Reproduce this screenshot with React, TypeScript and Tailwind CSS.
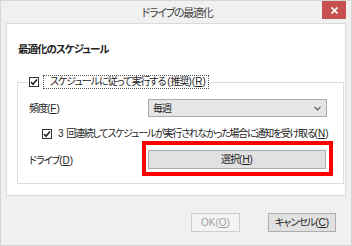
import {useState} from 'react';
import type {ReactNode} from 'react';

const FONT = 'font-["Liberation_Sans","Noto_Sans_CJK_JP",sans-serif] [font-feature-settings:"palt"]';

// latin bits keep normal spacing, only the kana get squeezed
function L({children}: { children: ReactNode }) {
    return <span className="tracking-[0px]">{children}</span>;
}

function Check({checked, onToggle}: { checked: boolean; onToggle: () => void }) {
    return (
        <button
            onClick={onToggle}
            className="w-[10px] h-[10px] border border-[#333] bg-white flex items-center justify-center shrink-0"
        >
            {checked && (
                <svg width="8" height="8" viewBox="0 0 8 8">
                    <path d="M1 4 L3 6.2 L7 1.5" fill="none" stroke="#222" strokeWidth="1.6"/>
                </svg>
            )}
        </button>
    );
}

export default function App() {
    const [scheduled, setScheduled] = useState(true);
    const [notify, setNotify] = useState(true);

    return (
        <div className={`w-[352px] h-[246px] bg-[#f0f0f0] border border-[#d6d6d6] flex flex-col text-[10px] tracking-[-1px] text-[#222] ${FONT}`}>
            <div className="h-[22px] grid grid-cols-[1fr_auto_1fr] items-start">
                <div/>
                <div className="text-[11px] tracking-[-1.3px] text-[#444] pt-[4px] pl-[2px]">ドライブの最適化</div>
                <div className="flex justify-end pr-[5px]">
                    <button className="w-[24px] h-[18px] bg-[#c75050] text-white flex items-center justify-center">
                        <svg width="7" height="7" viewBox="0 0 7 7">
                            <path d="M0.5 0.5 L6.5 6.5 M6.5 0.5 L0.5 6.5" stroke="#fff" strokeWidth="1.6"/>
                        </svg>
                    </button>
                </div>
            </div>

            <div className="mx-[5px] h-[173px] bg-white border border-[#dadada] pt-[17px] px-[10px]">
                <div className="font-bold text-[10.5px] leading-[16px] pl-[1px]">最適化のスケジュール</div>

                <fieldset className="mt-[18px] h-[109px] border border-[#dcdcdc] px-[10px]">
                    <legend className="flex items-center gap-[4px] px-[1px]">
                        <Check checked={scheduled} onToggle={() => setScheduled(!scheduled)}/>
                        <span className="border border-dotted border-[#555] pl-[6px] pr-[2px] leading-[12px]">
                            スケジュールに従って実行する <L>(</L>推奨<L>)(<u>R</u>)</L>
                        </span>
                    </legend>

                    <div className="flex items-center mt-[10px]">
                        <span className="w-[120px] pl-[1px]">頻度<L>(<u>F</u>)</L></span>
                        <div className="w-[179px] h-[18px] bg-[#e6e6e6] border border-[#acacac] flex items-center justify-between pl-[4px] pr-[5px]">
                            <span>毎週</span>
                            <svg width="7" height="5" viewBox="0 0 7 5">
                                <path d="M0.5 0.8 L3.5 3.8 L6.5 0.8" fill="none" stroke="#555" strokeWidth="1.2"/>
                            </svg>
                        </div>
                    </div>

                    <div className="flex items-center gap-[6px] mt-[9px] pl-[14px]">
                        <Check checked={notify} onToggle={() => setNotify(!notify)}/>
                        <span className="whitespace-nowrap tracking-[-1.25px]"><L>3 </L>回連続してスケジュールが実行されなかった場合に通知を受け取る<L>(<u>N</u>)</L></span>
                    </div>

                    <div className="flex items-start mt-[0px]">
                        <span className="w-[114px] pl-[1px] pt-[12px]">ドライブ<L>(<u>D</u>)</L></span>
                        <div className="border-4 border-[#ff0000] pt-[5px] pb-[3px] pl-[2px] pr-[3px]">
                            <button className="w-[178px] h-[19px] bg-[#e1e1e1] border border-[#adadad] flex items-center justify-center">
                                選択<L>(<u>H</u>)</L>
                            </button>
                        </div>
                    </div>
                </fieldset>
            </div>

            <div className="flex justify-end gap-[28px] pr-[15px] pt-[17px]">
                <button className="w-[49px] h-[19px] bg-[#f4f4f4] border border-[#cdcdcd] text-[#a0a0a0] tracking-[0px]">
                    OK(<u>O</u>)
                </button>
                <button className="w-[68px] h-[19px] bg-[#e1e1e1] border border-[#adadad]">
                    キャンセル<L>(<u>C</u>)</L>
                </button>
            </div>
        </div>
    );
}
